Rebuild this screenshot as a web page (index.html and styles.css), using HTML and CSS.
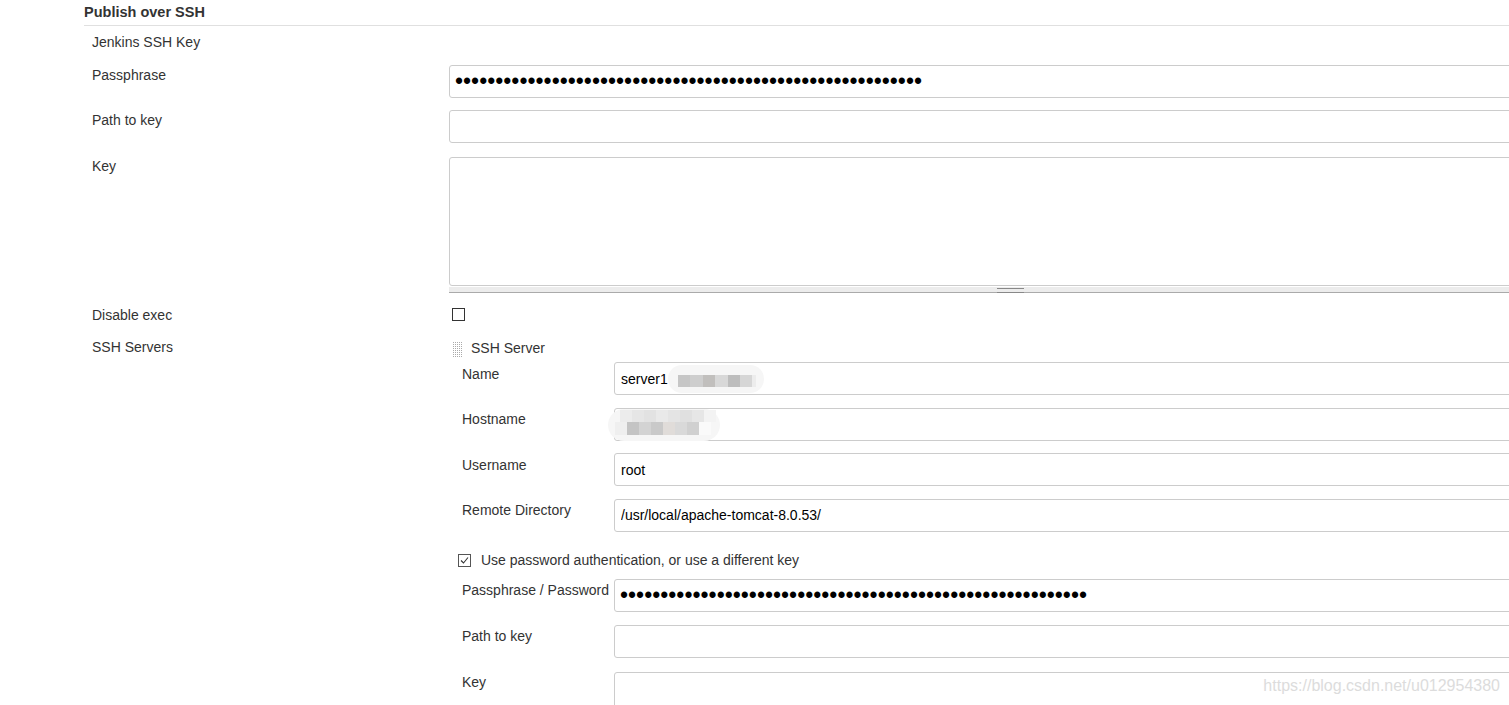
FILE: index.html
```html
<!DOCTYPE html>
<html lang="en">
<head>
  <meta charset="UTF-8">
  <title>Publish over SSH</title>
  <link rel="stylesheet" href="styles.css">
</head>
<body>
  <div class="page">
    <div class="section-header">Publish over SSH</div>

    <div class="form">
      <div class="row row-heading">
        <div class="label">Jenkins SSH Key</div>
      </div>

      <div class="row">
        <label class="label">Passphrase</label>
        <div class="setting">
          <input class="field secret" type="password" value="aaaaaaaaaaaaaaaaaaaaaaaaaaaaaaaaaaaaaaaaaaaaaaaaaaaaaaaaaa">
        </div>
      </div>

      <div class="row">
        <label class="label">Path to key</label>
        <div class="setting">
          <input class="field" type="text">
        </div>
      </div>

      <div class="row row-key">
        <label class="label">Key</label>
        <div class="setting">
          <textarea class="field textarea"></textarea>
          <div class="grip"></div>
        </div>
      </div>

      <div class="row row-check">
        <label class="label">Disable exec</label>
        <div class="setting">
          <span class="checkbox"></span>
        </div>
      </div>

      <div class="row row-servers">
        <label class="label">SSH Servers</label>
        <div class="setting">
          <div class="server">
            <div class="server-head"><span class="handle"></span>SSH Server</div>

            <div class="sub-row">
              <label class="label">Name</label>
              <div class="field-wrap">
                <input class="field" type="text" value="server1">
                <span class="blur blur-name"><span class="mosaic mosaic-name"></span></span>
              </div>
            </div>

            <div class="sub-row">
              <label class="label">Hostname</label>
              <div class="field-wrap">
                <input class="field" type="text">
                <span class="blur blur-host">
                  <span class="mosaic mosaic-host-top"></span>
                  <span class="mosaic mosaic-host-bottom"></span>
                </span>
              </div>
            </div>

            <div class="sub-row">
              <label class="label">Username</label>
              <div class="field-wrap">
                <input class="field" type="text" value="root">
              </div>
            </div>

            <div class="sub-row">
              <label class="label">Remote Directory</label>
              <div class="field-wrap">
                <input class="field" type="text" value="/usr/local/apache-tomcat-8.0.53/">
              </div>
            </div>

            <div class="check-row">
              <span class="checkbox checked">
                <svg width="13" height="13" viewBox="0 0 13 13">
                  <rect x="0.5" y="0.5" width="12" height="12" fill="#fff" stroke="#555"/>
                  <polyline points="3,6.5 5.5,9 10,3.5" fill="none" stroke="#333" stroke-width="1.1"/>
                </svg>
              </span>
              <span>Use password authentication, or use a different key</span>
            </div>

            <div class="sub-row">
              <label class="label">Passphrase / Password</label>
              <div class="field-wrap">
                <input class="field secret" type="password" value="aaaaaaaaaaaaaaaaaaaaaaaaaaaaaaaaaaaaaaaaaaaaaaaaaaaaaaaaaa">
              </div>
            </div>

            <div class="sub-row">
              <label class="label">Path to key</label>
              <div class="field-wrap">
                <input class="field" type="text">
              </div>
            </div>

            <div class="sub-row sub-key">
              <label class="label">Key</label>
              <div class="field-wrap">
                <textarea class="field textarea"></textarea>
              </div>
            </div>
          </div>
        </div>
      </div>
    </div>
  </div>

  <div class="watermark">https://blog.csdn.net/u012954380</div>
</body>
</html>
```

FILE: styles.css
```css
* {
  margin: 0;
  padding: 0;
  box-sizing: border-box;
}

body {
  font-family: "Liberation Sans", Arial, sans-serif;
  font-size: 14px;
  color: #333;
  background: #fff;
  overflow: hidden;
  height: 705px;
  position: relative;
}

.page {
  width: 1572px;
  padding-left: 84px;
}

.section-header {
  font-weight: 700;
  font-size: 14.5px;
  line-height: 17px;
  padding: 4px 0 4px;
  border-bottom: 1px solid #e0e0e0;
}

.form {
  padding-left: 8px;
}

.row {
  display: grid;
  grid-template-columns: 357px 1fr;
  padding: 6px 0;
}

.label {
  display: block;
  line-height: 17px;
  padding-top: 2px;
}

.row-heading {
  padding: 8px 0 8px;
}

.row-heading .label {
  padding-top: 0;
}

.row-key {
  padding-top: 8px;
}

.row-key .label {
  padding-top: 1px;
}

.row-check {
  padding: 8px 0 0;
}

.row-check .label,
.row-servers .label {
  padding-top: 0;
}

.row-servers {
  padding-top: 15px;
}

/* inputs */
.field {
  display: block;
  width: 100%;
  height: 33px;
  border: 1px solid #ccc;
  border-radius: 3px;
  padding: 0 6px;
  font-family: "Liberation Sans", Arial, sans-serif;
  font-size: 14px;
  color: #000;
  background: #fff;
  outline: none;
}

.secret {
  font-size: 23px;
  letter-spacing: 0;
  padding-left: 5px;
}

.textarea {
  height: 129px;
  resize: none;
}

.grip {
  margin-top: 1px;
  height: 6px;
  background: #ececec;
  border-bottom: 1px solid #aaa;
  display: flex;
  justify-content: center;
}

.grip::before {
  content: "";
  width: 27px;
  height: 3px;
  margin-top: 1px;
  border-top: 1px solid #888;
  border-bottom: 1px solid #888;
}

.checkbox {
  display: block;
  width: 13px;
  height: 13px;
  border: 1px solid #333;
  margin: 1px 0 0 3px;
  background: #fff;
}

.checkbox.checked {
  border: none;
  margin: 0;
}

.checkbox svg {
  display: block;
}

/* ssh server block */
.server-head {
  display: flex;
  align-items: center;
  line-height: 17px;
  height: 17px;
  padding-top: 1px;
}

.handle {
  width: 11px;
  height: 16px;
  margin: 2px 8px 0 3px;
  background-image:
    linear-gradient(90deg, #fff 1px, transparent 1px),
    linear-gradient(#fff 1px, #aaa 1px);
  background-size: 2px 2px;
}

.sub-row {
  display: grid;
  grid-template-columns: 152px 1fr;
  padding: 6px 0 6.67px 13px;
}

.sub-row .label {
  padding-top: 3.5px;
}

.sub-key {
  padding-top: 7.5px;
}

.sub-key .label {
  padding-top: 2px;
}

.field-wrap {
  position: relative;
}

.check-row {
  display: flex;
  align-items: center;
  gap: 10px;
  line-height: 17px;
  padding: 13px 0 4.33px 9px;
}

/* blurred-out parts of the screenshot */
.blur {
  position: absolute;
  background: #f6f6f6;
  border-radius: 14px;
}

.blur-name {
  left: 54px;
  top: 3px;
  width: 96px;
  height: 28px;
}

.mosaic {
  display: block;
  height: 12px;
}

.mosaic-name {
  margin: 10px 0 0 10px;
  width: 78px;
  background: linear-gradient(90deg,
    #c6c6c6 0 12px, #cecece 12px 25px, #c1bfbd 25px 37px,
    #d8d8d8 37px 50px, #bdbdbd 50px 62px, #d6d6d6 62px 74px, #ececec 74px);
}

.blur-host {
  left: -6px;
  top: 1px;
  width: 112px;
  height: 32px;
  border-radius: 16px;
}

.mosaic-host-top {
  margin: 1px 0 0 12px;
  width: 96px;
  background: linear-gradient(90deg,
    #ececec 0 12px, #e6e6e6 12px 24px, #e2e2e2 24px 36px, #e9e9e9 36px 48px,
    #e4e4e4 48px 60px, #e0e0e0 60px 72px, #e6e6e6 72px 84px, #f3f3f3 84px);
}

.mosaic-host-bottom {
  margin: 0 0 0 7px;
  height: 13px;
  width: 96px;
  background: linear-gradient(90deg,
    #efefef 0 12px, #c4c4c4 12px 24px, #d3d3d3 24px 36px, #c9c9c9 36px 48px,
    #e0dcd9 48px 60px, #d9d9d9 60px 72px, #d0d0d0 72px 84px, #fafafa 84px);
}

.watermark {
  position: absolute;
  right: 9px;
  top: 676px;
  font-size: 16px;
  line-height: 20px;
  color: #dcdcdc;
}
```
